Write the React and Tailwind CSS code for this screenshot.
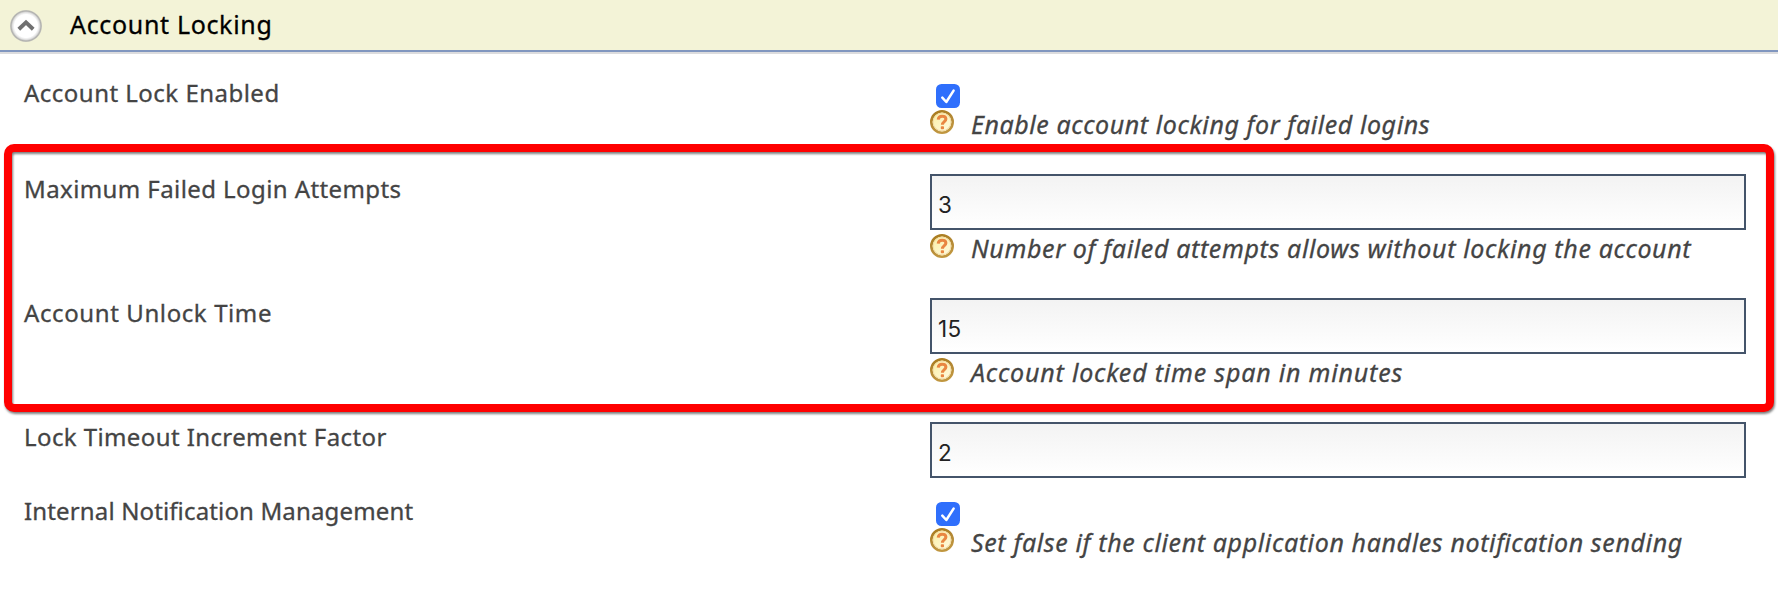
import React from 'react';

function CollapseIcon() {
  return (
    <svg className="block h-8 w-8 shrink-0" viewBox="0 0 32 32">
      <defs>
        <radialGradient id="ring">
          <stop offset="0.72" stopColor="#ffffff" />
          <stop offset="0.84" stopColor="#e2e2e2" />
          <stop offset="0.93" stopColor="#b0b0ae" />
          <stop offset="1" stopColor="#c8c8be" />
        </radialGradient>
      </defs>
      <circle cx="16" cy="16" r="16" fill="url(#ring)" />
      <path d="M8.8 19.2 L16 12.4 L23.2 19.2" fill="none" stroke="#707070" strokeWidth="4" />
    </svg>
  );
}

function HelpIcon() {
  return (
    <svg className="block h-6 w-6 shrink-0" viewBox="0 0 24 24">
      <defs>
        <linearGradient id="gold" x1="0" y1="0" x2="0.3" y2="1">
          <stop offset="0" stopColor="#a87a1c" />
          <stop offset="0.55" stopColor="#b58a36" />
          <stop offset="1" stopColor="#c0963f" />
        </linearGradient>
        <linearGradient id="cream" x1="0" y1="0" x2="1" y2="1">
          <stop offset="0" stopColor="#faeea0" />
          <stop offset="1" stopColor="#fffbe6" />
        </linearGradient>
      </defs>
      <circle cx="12" cy="12" r="10.7" fill="url(#cream)" stroke="url(#gold)" strokeWidth="2.6" />
      <circle cx="12" cy="12" r="8.9" fill="none" stroke="#f3dca6" strokeWidth="1" />
      <path
        d="M8.2 9.6 C8.4 7 10 6.2 12.1 6.2 C14.4 6.2 15.9 7.2 15.9 9.1 C15.9 11.7 12.5 11.6 12.4 14.8"
        fill="none"
        stroke="#e98642"
        strokeWidth="3"
      />
      <rect x="10.8" y="16.2" width="3.2" height="3" rx="0.8" fill="#e98642" />
    </svg>
  );
}

function Checkbox() {
  return (
    <div className="ml-1.5 mt-1.5 h-6 w-6 rounded-[5.5px] bg-[#2f6ffc]" role="checkbox" aria-checked="true">
      <svg className="block h-6 w-6" viewBox="0 0 24 24">
        <path
          d="M6.3 13.6 L10.3 18 L17.6 6.6"
          fill="none"
          stroke="#ffffff"
          strokeWidth="2.5"
          strokeLinecap="round"
          strokeLinejoin="round"
        />
      </svg>
    </div>
  );
}

function TextField({ value }) {
  return (
    <input
      className="block h-14 w-[816px] border-2 border-[#44546a] bg-linear-to-b from-[#f3f3f3] to-white pb-0 pl-[6px] pt-[4px] font-['Inter',sans-serif] text-[22.5px] tracking-[0.4px] text-[#222] outline-none [-webkit-text-stroke-width:0]"
      defaultValue={value}
    />
  );
}

function Hint({ children, className }) {
  return (
    <div className="flex">
      <HelpIcon />
      <span className={`ml-[17px] whitespace-nowrap text-[25px] italic leading-[28px] ${className}`}>{children}</span>
    </div>
  );
}

function Row({ label, labelClass, className, children }) {
  return (
    <div className={`flex ${className}`}>
      <div className={`w-[906px] shrink-0 whitespace-nowrap leading-[30px] ${labelClass}`}>{label}</div>
      <div>{children}</div>
    </div>
  );
}

export default function App() {
  return (
    <div className="relative h-[608px] w-[1778px] overflow-hidden bg-white font-['Noto_Sans',sans-serif] text-[24px] text-[#444] [font-feature-settings:'liga'_1] [-webkit-text-stroke-width:0.3px]">
      <div className="flex h-[54px] border-b-2 border-[#dcdcde] bg-[#f3f3d7]">
        <div className="flex h-[52px] w-full border-b-2 border-[#8096bf] pl-[10px] pt-[10px]">
          <CollapseIcon />
          <h2 className="-mt-1 ml-7 text-[25px] leading-[36px] tracking-[0.67px] text-black">Account Locking</h2>
        </div>
      </div>

      <div className="pl-6 pt-6">
        <Row label="Account Lock Enabled" labelClass="tracking-[0.48px]" className="h-24">
          <Checkbox />
          <div className="mt-0.5">
            <Hint className="tracking-[0.58px]">Enable account locking for failed logins</Hint>
          </div>
        </Row>
        <Row label="Maximum Failed Login Attempts" labelClass="tracking-[0.41px]" className="h-[124px]">
          <TextField value="3" />
          <div className="mt-1">
            <Hint className="tracking-[0.63px]">Number of failed attempts allows without locking the account</Hint>
          </div>
        </Row>
        <Row label="Account Unlock Time" labelClass="tracking-[0.6px]" className="h-[124px]">
          <TextField value="15" />
          <div className="mt-1">
            <Hint className="tracking-[0.8px]">Account locked time span in minutes</Hint>
          </div>
        </Row>
        <Row label="Lock Timeout Increment Factor" labelClass="tracking-[0.4px]" className="h-[74px]">
          <TextField value="2" />
        </Row>
        <Row label="Internal Notification Management" labelClass="tracking-[0.15px]" className="h-24">
          <Checkbox />
          <div className="mt-0.5">
            <Hint className="tracking-[0.62px]">Set false if the client application handles notification sending</Hint>
          </div>
        </Row>
      </div>

      <div className="pointer-events-none absolute left-1 top-36 h-[268px] w-[1770px] rounded-[10px] border-8 border-[#ff0000] drop-shadow-[1px_2px_1px_rgba(0,0,0,0.5)]" />
    </div>
  );
}
